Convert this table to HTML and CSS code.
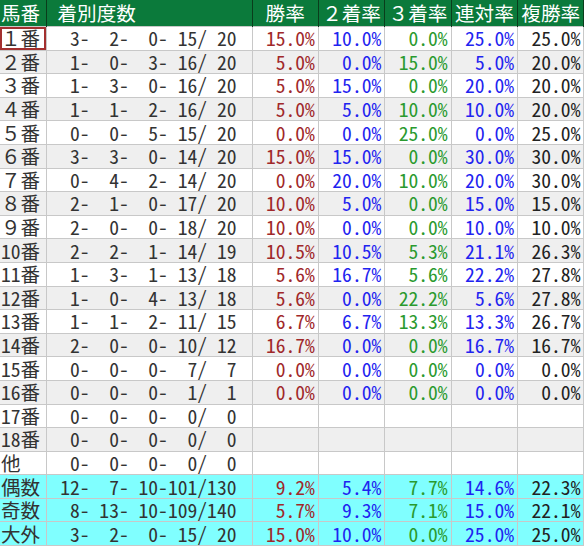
FILE: index.html
```html
<!DOCTYPE html>
<html lang="ja">
<head>
<meta charset="utf-8">
<link rel="stylesheet" href="styles.css">
</head>
<body>
<table class="stats">
<colgroup>
<col class="w-no"><col class="w-rec"><col class="w-rate"><col class="w-rate"><col class="w-rate"><col class="w-rate"><col class="w-rate">
</colgroup>
<thead>
<tr><th class="no">馬番</th><th class="rec">着別度数</th><th>勝率</th><th>２着率</th><th>３着率</th><th>連対率</th><th>複勝率</th></tr>
</thead>
<tbody>
<tr><td class="no sel">１番</td><td class="rec"> 3-  2-  0- 15/ 20</td><td class="r1">15.0%</td><td class="r2">10.0%</td><td class="r3">0.0%</td><td class="r4">25.0%</td><td class="r5">25.0%</td></tr>
<tr class="alt"><td class="no">２番</td><td class="rec"> 1-  0-  3- 16/ 20</td><td class="r1">5.0%</td><td class="r2">0.0%</td><td class="r3">15.0%</td><td class="r4">5.0%</td><td class="r5">20.0%</td></tr>
<tr><td class="no">３番</td><td class="rec"> 1-  3-  0- 16/ 20</td><td class="r1">5.0%</td><td class="r2">15.0%</td><td class="r3">0.0%</td><td class="r4">20.0%</td><td class="r5">20.0%</td></tr>
<tr class="alt"><td class="no">４番</td><td class="rec"> 1-  1-  2- 16/ 20</td><td class="r1">5.0%</td><td class="r2">5.0%</td><td class="r3">10.0%</td><td class="r4">10.0%</td><td class="r5">20.0%</td></tr>
<tr><td class="no">５番</td><td class="rec"> 0-  0-  5- 15/ 20</td><td class="r1">0.0%</td><td class="r2">0.0%</td><td class="r3">25.0%</td><td class="r4">0.0%</td><td class="r5">25.0%</td></tr>
<tr class="alt"><td class="no">６番</td><td class="rec"> 3-  3-  0- 14/ 20</td><td class="r1">15.0%</td><td class="r2">15.0%</td><td class="r3">0.0%</td><td class="r4">30.0%</td><td class="r5">30.0%</td></tr>
<tr><td class="no">７番</td><td class="rec"> 0-  4-  2- 14/ 20</td><td class="r1">0.0%</td><td class="r2">20.0%</td><td class="r3">10.0%</td><td class="r4">20.0%</td><td class="r5">30.0%</td></tr>
<tr class="alt"><td class="no">８番</td><td class="rec"> 2-  1-  0- 17/ 20</td><td class="r1">10.0%</td><td class="r2">5.0%</td><td class="r3">0.0%</td><td class="r4">15.0%</td><td class="r5">15.0%</td></tr>
<tr><td class="no">９番</td><td class="rec"> 2-  0-  0- 18/ 20</td><td class="r1">10.0%</td><td class="r2">0.0%</td><td class="r3">0.0%</td><td class="r4">10.0%</td><td class="r5">10.0%</td></tr>
<tr class="alt"><td class="no">10番</td><td class="rec"> 2-  2-  1- 14/ 19</td><td class="r1">10.5%</td><td class="r2">10.5%</td><td class="r3">5.3%</td><td class="r4">21.1%</td><td class="r5">26.3%</td></tr>
<tr><td class="no">11番</td><td class="rec"> 1-  3-  1- 13/ 18</td><td class="r1">5.6%</td><td class="r2">16.7%</td><td class="r3">5.6%</td><td class="r4">22.2%</td><td class="r5">27.8%</td></tr>
<tr class="alt"><td class="no">12番</td><td class="rec"> 1-  0-  4- 13/ 18</td><td class="r1">5.6%</td><td class="r2">0.0%</td><td class="r3">22.2%</td><td class="r4">5.6%</td><td class="r5">27.8%</td></tr>
<tr><td class="no">13番</td><td class="rec"> 1-  1-  2- 11/ 15</td><td class="r1">6.7%</td><td class="r2">6.7%</td><td class="r3">13.3%</td><td class="r4">13.3%</td><td class="r5">26.7%</td></tr>
<tr class="alt"><td class="no">14番</td><td class="rec"> 2-  0-  0- 10/ 12</td><td class="r1">16.7%</td><td class="r2">0.0%</td><td class="r3">0.0%</td><td class="r4">16.7%</td><td class="r5">16.7%</td></tr>
<tr><td class="no">15番</td><td class="rec"> 0-  0-  0-  7/  7</td><td class="r1">0.0%</td><td class="r2">0.0%</td><td class="r3">0.0%</td><td class="r4">0.0%</td><td class="r5">0.0%</td></tr>
<tr class="alt"><td class="no">16番</td><td class="rec"> 0-  0-  0-  1/  1</td><td class="r1">0.0%</td><td class="r2">0.0%</td><td class="r3">0.0%</td><td class="r4">0.0%</td><td class="r5">0.0%</td></tr>
<tr><td class="no">17番</td><td class="rec"> 0-  0-  0-  0/  0</td><td></td><td></td><td></td><td></td><td></td></tr>
<tr class="alt"><td class="no">18番</td><td class="rec"> 0-  0-  0-  0/  0</td><td></td><td></td><td></td><td></td><td></td></tr>
<tr><td class="no">他</td><td class="rec"> 0-  0-  0-  0/  0</td><td></td><td></td><td></td><td></td><td></td></tr>
<tr class="sum"><td class="no">偶数</td><td class="rec">12-  7- 10-101/130</td><td class="r1">9.2%</td><td class="r2">5.4%</td><td class="r3">7.7%</td><td class="r4">14.6%</td><td class="r5">22.3%</td></tr>
<tr class="sum"><td class="no">奇数</td><td class="rec"> 8- 13- 10-109/140</td><td class="r1">5.7%</td><td class="r2">9.3%</td><td class="r3">7.1%</td><td class="r4">15.0%</td><td class="r5">22.1%</td></tr>
<tr class="sum"><td class="no">大外</td><td class="rec"> 3-  2-  0- 15/ 20</td><td class="r1">15.0%</td><td class="r2">10.0%</td><td class="r3">0.0%</td><td class="r4">25.0%</td><td class="r5">25.0%</td></tr>
</tbody>
</table>
</body>
</html>
```

FILE: styles.css
```css
html, body {
  margin: 0;
  padding: 0;
  background: #ffffff;
}

.stats {
  border-collapse: collapse;
  table-layout: fixed;
  width: 584px;
  font-family: "Noto Sans Mono CJK JP", "Noto Sans CJK JP", "DejaVu Sans Mono", monospace;
  font-size: 19.6px;
  color: #333333;
}

.w-no { width: 46px; }
.w-rec { width: 206px; }
.w-rate { width: 66.4px; }

.stats th {
  height: 26px;
  padding: 0;
  background: #0b7a3b;
  color: #ffffff;
  font-weight: normal;
  text-align: center;
  line-height: 24px;
  border-left: 1px solid #0a3d1c;
  border-right: 1px solid #0a3d1c;
  white-space: nowrap;
}

.stats th.no {
  text-align: left;
  padding-left: 1px;
  border-left: none;
}

.stats th.rec {
  text-align: left;
  padding-left: 11px;
}

.stats td {
  height: 22.6px;
  padding: 0 3px 0 0;
  border: 1px solid #c8c8c8;
  text-align: right;
  line-height: 22px;
  white-space: pre;
  background: #ffffff;
}

.stats tr.alt td {
  background: #efefef;
}

.stats tr.sum td {
  background: #80ffff;
}

.stats td.no {
  text-align: left;
  padding: 0 0 0 1px;
  border-left: none;
  color: #333333;
}

.stats td.sel {
  box-shadow: inset 0 0 0 2px #a3302f;
}

.stats td.rec {
  padding-right: 15px;
  color: #333333;
}

.r1 { color: #a0282a; }
.r2 { color: #1f24f0; }
.r3 { color: #2a9a2e; }
.r4 { color: #1f24f0; }
.r5 { color: #222222; }
```
